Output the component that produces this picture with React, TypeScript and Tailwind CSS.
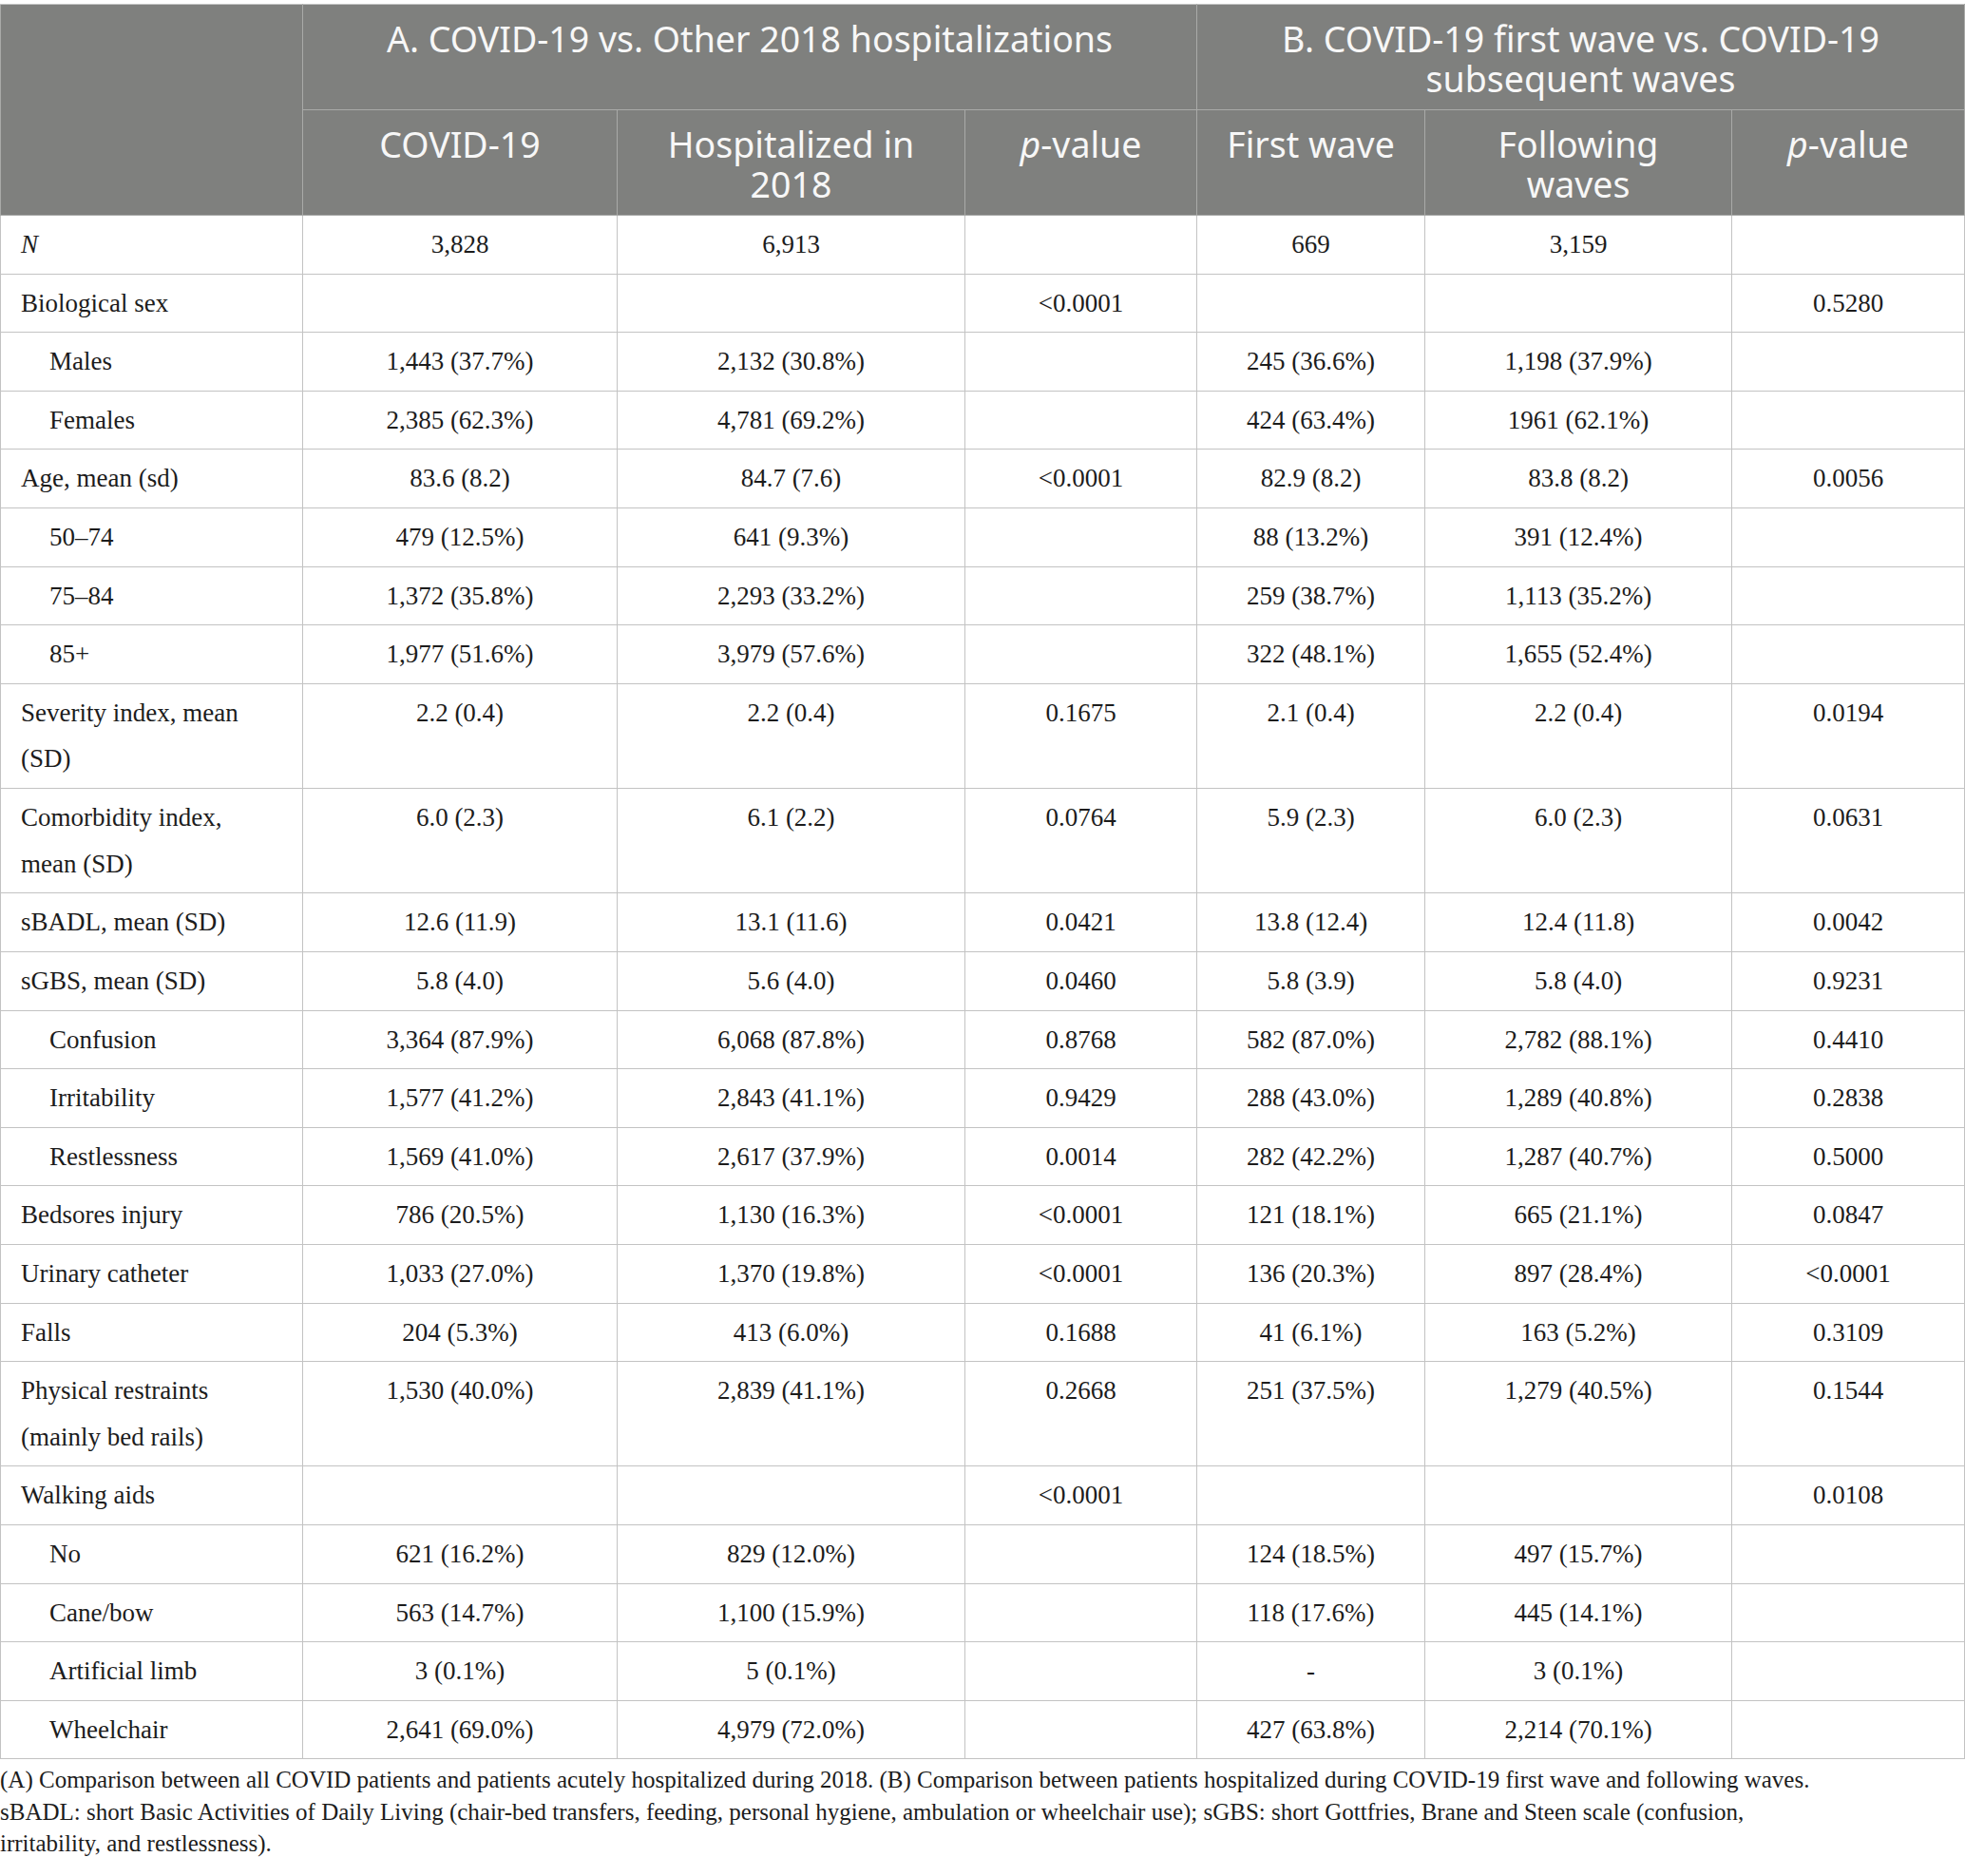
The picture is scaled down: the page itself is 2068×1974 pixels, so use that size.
const serif = { fontFamily: '"Liberation Serif", "Times New Roman", serif' };

type Row = {
  label: React.ReactNode;
  indent?: boolean;
  cells: string[];
};

const rows: Row[] = [
  { label: <span className="italic">N</span>, cells: ['3,828', '6,913', '', '669', '3,159', ''] },
  { label: 'Biological sex', cells: ['', '', '<0.0001', '', '', '0.5280'] },
  { label: 'Males', indent: true, cells: ['1,443 (37.7%)', '2,132 (30.8%)', '', '245 (36.6%)', '1,198 (37.9%)', ''] },
  { label: 'Females', indent: true, cells: ['2,385 (62.3%)', '4,781 (69.2%)', '', '424 (63.4%)', '1961 (62.1%)', ''] },
  { label: 'Age, mean (sd)', cells: ['83.6 (8.2)', '84.7 (7.6)', '<0.0001', '82.9 (8.2)', '83.8 (8.2)', '0.0056'] },
  { label: '50–74', indent: true, cells: ['479 (12.5%)', '641 (9.3%)', '', '88 (13.2%)', '391 (12.4%)', ''] },
  { label: '75–84', indent: true, cells: ['1,372 (35.8%)', '2,293 (33.2%)', '', '259 (38.7%)', '1,113 (35.2%)', ''] },
  { label: '85+', indent: true, cells: ['1,977 (51.6%)', '3,979 (57.6%)', '', '322 (48.1%)', '1,655 (52.4%)', ''] },
  { label: <>Severity index, mean<br />(SD)</>, cells: ['2.2 (0.4)', '2.2 (0.4)', '0.1675', '2.1 (0.4)', '2.2 (0.4)', '0.0194'] },
  { label: <>Comorbidity index,<br />mean (SD)</>, cells: ['6.0 (2.3)', '6.1 (2.2)', '0.0764', '5.9 (2.3)', '6.0 (2.3)', '0.0631'] },
  { label: 'sBADL, mean (SD)', cells: ['12.6 (11.9)', '13.1 (11.6)', '0.0421', '13.8 (12.4)', '12.4 (11.8)', '0.0042'] },
  { label: 'sGBS, mean (SD)', cells: ['5.8 (4.0)', '5.6 (4.0)', '0.0460', '5.8 (3.9)', '5.8 (4.0)', '0.9231'] },
  { label: 'Confusion', indent: true, cells: ['3,364 (87.9%)', '6,068 (87.8%)', '0.8768', '582 (87.0%)', '2,782 (88.1%)', '0.4410'] },
  { label: 'Irritability', indent: true, cells: ['1,577 (41.2%)', '2,843 (41.1%)', '0.9429', '288 (43.0%)', '1,289 (40.8%)', '0.2838'] },
  { label: 'Restlessness', indent: true, cells: ['1,569 (41.0%)', '2,617 (37.9%)', '0.0014', '282 (42.2%)', '1,287 (40.7%)', '0.5000'] },
  { label: 'Bedsores injury', cells: ['786 (20.5%)', '1,130 (16.3%)', '<0.0001', '121 (18.1%)', '665 (21.1%)', '0.0847'] },
  { label: 'Urinary catheter', cells: ['1,033 (27.0%)', '1,370 (19.8%)', '<0.0001', '136 (20.3%)', '897 (28.4%)', '<0.0001'] },
  { label: 'Falls', cells: ['204 (5.3%)', '413 (6.0%)', '0.1688', '41 (6.1%)', '163 (5.2%)', '0.3109'] },
  { label: <>Physical restraints<br />(mainly bed rails)</>, cells: ['1,530 (40.0%)', '2,839 (41.1%)', '0.2668', '251 (37.5%)', '1,279 (40.5%)', '0.1544'] },
  { label: 'Walking aids', cells: ['', '', '<0.0001', '', '', '0.0108'] },
  { label: 'No', indent: true, cells: ['621 (16.2%)', '829 (12.0%)', '', '124 (18.5%)', '497 (15.7%)', ''] },
  { label: 'Cane/bow', indent: true, cells: ['563 (14.7%)', '1,100 (15.9%)', '', '118 (17.6%)', '445 (14.1%)', ''] },
  { label: 'Artificial limb', indent: true, cells: ['3 (0.1%)', '5 (0.1%)', '', '-', '3 (0.1%)', ''] },
  { label: 'Wheelchair', indent: true, cells: ['2,641 (69.0%)', '4,979 (72.0%)', '', '427 (63.8%)', '2,214 (70.1%)', ''] },
];

const PValue = () => (
  <>
    <span className="italic">p</span>-value
  </>
);

export default function App() {
  const th = 'border border-[#a9aaa8] px-2 pt-[15px] pb-[11px] align-top text-center font-normal';
  const td = 'border border-[#c3c3c3] px-2 pt-[6px] pb-[5.9px] align-top text-center';

  return (
    <div className="w-[2068px] bg-white pt-[4px]">
      <table className="w-full table-fixed border-collapse">
        <colgroup>
          <col className="w-[318px]" />
          <col className="w-[331px]" />
          <col className="w-[366px]" />
          <col className="w-[244px]" />
          <col className="w-[240px]" />
          <col className="w-[323px]" />
          <col className="w-[245px]" />
        </colgroup>
        <thead
          className="bg-[#7f807e] text-[#f7f7f7] text-[37.5px] leading-[42px]"
          style={{ fontFamily: '"Noto Sans", "Open Sans", sans-serif' }}
        >
          <tr>
            <th rowSpan={2} className="border border-[#a9aaa8] border-t-[#c3c3c3]" />
            <th colSpan={3} className={`${th} border-t-[#c3c3c3]`}>
              A. COVID-19 vs. Other 2018 hospitalizations
            </th>
            <th colSpan={3} className={`${th} border-t-[#c3c3c3]`}>
              B. COVID-19 first wave vs. COVID-19
              <br />
              subsequent waves
            </th>
          </tr>
          <tr>
            <th className={th}>COVID-19</th>
            <th className={th}>
              Hospitalized in
              <br />
              2018
            </th>
            <th className={th}>
              <PValue />
            </th>
            <th className={th}>First wave</th>
            <th className={th}>
              Following
              <br />
              waves
            </th>
            <th className={th}>
              <PValue />
            </th>
          </tr>
        </thead>
        <tbody className="text-[27px] leading-[48.7px] text-[#1c1c1c]" style={serif}>
          {rows.map((row, i) => (
            <tr key={i}>
              <td
                className={`border border-[#c3c3c3] pt-[6px] pb-[5.9px] pr-2 align-top text-left ${
                  row.indent ? 'pl-[51px]' : 'pl-[21px]'
                }`}
              >
                {row.label}
              </td>
              {row.cells.map((c, j) => (
                <td key={j} className={td}>
                  {c}
                </td>
              ))}
            </tr>
          ))}
        </tbody>
      </table>
      <div className="mt-[5px] text-[25px] leading-[33.5px] text-[#1c1c1c] whitespace-nowrap" style={serif}>
        <div>
          (A) Comparison between all COVID patients and patients acutely hospitalized during 2018. (B) Comparison
          between patients hospitalized during COVID-19 first wave and following waves.
        </div>
        <div>
          sBADL: short Basic Activities of Daily Living (chair-bed transfers, feeding, personal hygiene, ambulation or
          wheelchair use); sGBS: short Gottfries, Brane and Steen scale (confusion,
        </div>
        <div>irritability, and restlessness).</div>
      </div>
    </div>
  );
}
